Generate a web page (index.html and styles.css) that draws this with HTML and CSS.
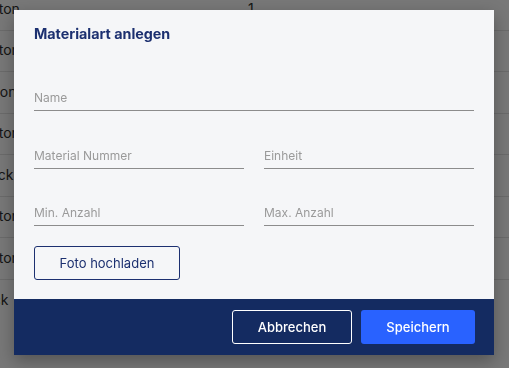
FILE: index.html
```html
<!DOCTYPE html>
<html lang="de">
<head>
    <meta charset="UTF-8">
    <meta name="viewport" content="width=device-width, initial-scale=1.0">
    <title>Materialart anlegen</title>
    <link rel="stylesheet" href="styles.css">
</head>
<body>
    <div class="table">
        <div class="row"><span class="cell">Karton</span><span class="num">1</span></div>
        <div class="row"><span class="cell">Karton</span></div>
        <div class="row"><span class="cell">Ballon</span></div>
        <div class="row"><span class="cell">Karton</span></div>
        <div class="row"><span class="cell">Stück</span></div>
        <div class="row"><span class="cell">Karton</span></div>
        <div class="row"><span class="cell">Karton</span></div>
        <div class="row last"><span class="cell">Sack</span></div>
    </div>

    <div class="overlay"></div>

    <div class="modal">
        <div class="modal-body">
            <h2 class="modal-title">Materialart anlegen</h2>
            <div class="form">
                <input class="field full" type="text" placeholder="Name">
                <input class="field" type="text" placeholder="Material Nummer">
                <input class="field" type="text" placeholder="Einheit">
                <input class="field" type="text" placeholder="Min. Anzahl">
                <input class="field" type="text" placeholder="Max. Anzahl">
            </div>
            <button class="upload">Foto hochladen</button>
        </div>
        <div class="modal-footer">
            <button class="btn-cancel">Abbrechen</button>
            <button class="btn-save">Speichern</button>
        </div>
    </div>
</body>
</html>
```

FILE: styles.css
```css
body {
    font-family: Inter, "Noto Sans", sans-serif;
    background-color: #ffffff;
    margin: 0;
    padding: 0;
    height: 100vh;
    overflow: hidden;
}

.table {
    margin-top: -11px;
}

.row {
    height: 41.5px;
    border-bottom: 1px solid #e4e4e4;
    box-sizing: border-box;
    display: flex;
    align-items: center;
    font-size: 14px;
    color: #2e2e2e;
    padding-bottom: 2px;
}

.row.last {
    border-bottom: none;
}

.cell {
    margin-left: -24px;
    width: 290px;
}

.num {
    margin-left: -18px;
}

.overlay {
    position: fixed;
    inset: 0;
    background-color: rgba(0, 0, 0, 0.53);
}

.modal {
    position: absolute;
    left: 14px;
    top: 10px;
    width: 480px;
    background-color: #f5f6f8;
    box-shadow: 0 6px 16px rgba(0, 0, 0, 0.3);
}

.modal-body {
    padding: 14px 20px 19px;
}

.modal-title {
    margin: 0;
    font-size: 14.3px;
    line-height: 20px;
    font-weight: 700;
    color: #1c3070;
}

.form {
    display: grid;
    grid-template-columns: 1fr 1fr;
    column-gap: 20px;
    row-gap: 27px;
    margin-top: 37px;
}

.field {
    height: 30px;
    box-sizing: border-box;
    border: none;
    border-bottom: 1px solid #8c8c8c;
    background: transparent;
    padding: 3px 0 0;
    font-family: inherit;
    font-size: 12px;
    color: #333;
    outline: none;
}

.field::placeholder {
    color: #9a9a9a;
}

.full {
    grid-column: 1 / 3;
    margin-bottom: 1px;
}

.upload {
    margin-top: 20px;
    width: 146px;
    height: 34px;
    background: transparent;
    border: 1px solid #1c3070;
    border-radius: 3px;
    color: #1c3070;
    font-family: inherit;
    font-size: 13px;
    cursor: pointer;
}

.modal-footer {
    background-color: #142b61;
    padding: 11px 19px 11px 20px;
    display: flex;
    justify-content: flex-end;
    gap: 9px;
}

.modal-footer button {
    height: 34px;
    border-radius: 3px;
    font-family: inherit;
    font-size: 13px;
    font-weight: 500;
    color: #ffffff;
    cursor: pointer;
}

.btn-cancel {
    width: 120px;
    background: transparent;
    border: 1px solid #ffffff;
}

.btn-save {
    width: 114px;
    background-color: #2962ff;
    border: none;
}
```
